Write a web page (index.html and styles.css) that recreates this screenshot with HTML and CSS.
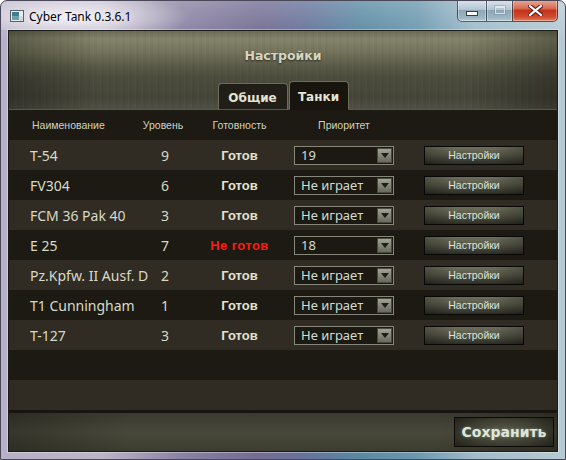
FILE: index.html
```html
<!DOCTYPE html>
<html lang="ru">
<head>
    <meta charset="UTF-8">
    <title>Cyber Tank 0.3.6.1</title>
    <link rel="stylesheet" href="styles.css">
</head>
<body>
    <div class="window">
        <div class="titlebar">
            <svg class="app-icon" width="14" height="12" viewBox="0 0 14 12">
                <rect x="0.5" y="0.5" width="13" height="11" fill="#e8eef0" stroke="#5a6068"/>
                <rect x="2" y="2" width="7" height="8" fill="#3d7f8c"/>
                <rect x="2" y="6" width="7" height="4" fill="#6aa0a8"/>
                <rect x="10" y="7" width="2" height="3" fill="#ffffff" stroke="#8a9098" stroke-width="0.5"/>
            </svg>
            <span class="title">Cyber Tank 0.3.6.1</span>
            <div class="caption-buttons">
                <div class="cap cap-min"><span class="glyph-min"></span></div>
                <div class="cap cap-max"><span class="glyph-max"></span></div>
                <div class="cap cap-close">
                    <svg width="15" height="11" viewBox="0 0 15 11">
                        <path d="M2 1 L13 10 M13 1 L2 10" stroke="#5a1a10" stroke-width="4.2" stroke-linecap="square"/>
                        <path d="M2 1 L13 10 M13 1 L2 10" stroke="#ffffff" stroke-width="2.2" stroke-linecap="square"/>
                    </svg>
                </div>
            </div>
        </div>

        <div class="client">
            <div class="header">
                <h1>Настройки</h1>
                <div class="tabs">
                    <div class="tab">Общие</div>
                    <div class="tab active">Танки</div>
                </div>
            </div>

            <div class="table">
                <div class="row head">
                    <div class="col-name">Наименование</div>
                    <div class="col-level">Уровень</div>
                    <div class="col-ready">Готовность</div>
                    <div class="col-prio">Приоритет</div>
                    <div></div>
                </div>

                <div class="row light">
                    <div class="col-name">T-54</div>
                    <div class="col-level">9</div>
                    <div class="col-ready ready">Готов</div>
                    <div class="col-prio"><div class="combo"><span class="combo-num">19</span><span class="combo-arrow"></span></div></div>
                    <div class="col-btn"><button class="btn-settings">Настройки</button></div>
                </div>
                <div class="row dark">
                    <div class="col-name">FV304</div>
                    <div class="col-level">6</div>
                    <div class="col-ready ready">Готов</div>
                    <div class="col-prio"><div class="combo"><span>Не играет</span><span class="combo-arrow"></span></div></div>
                    <div class="col-btn"><button class="btn-settings">Настройки</button></div>
                </div>
                <div class="row light">
                    <div class="col-name">FCM 36 Pak 40</div>
                    <div class="col-level">3</div>
                    <div class="col-ready ready">Готов</div>
                    <div class="col-prio"><div class="combo"><span>Не играет</span><span class="combo-arrow"></span></div></div>
                    <div class="col-btn"><button class="btn-settings">Настройки</button></div>
                </div>
                <div class="row dark">
                    <div class="col-name">E 25</div>
                    <div class="col-level">7</div>
                    <div class="col-ready not-ready">Не готов</div>
                    <div class="col-prio"><div class="combo"><span class="combo-num">18</span><span class="combo-arrow"></span></div></div>
                    <div class="col-btn"><button class="btn-settings">Настройки</button></div>
                </div>
                <div class="row light">
                    <div class="col-name">Pz.Kpfw. II Ausf. D</div>
                    <div class="col-level">2</div>
                    <div class="col-ready ready">Готов</div>
                    <div class="col-prio"><div class="combo"><span>Не играет</span><span class="combo-arrow"></span></div></div>
                    <div class="col-btn"><button class="btn-settings">Настройки</button></div>
                </div>
                <div class="row dark">
                    <div class="col-name">T1 Cunningham</div>
                    <div class="col-level">1</div>
                    <div class="col-ready ready">Готов</div>
                    <div class="col-prio"><div class="combo"><span>Не играет</span><span class="combo-arrow"></span></div></div>
                    <div class="col-btn"><button class="btn-settings">Настройки</button></div>
                </div>
                <div class="row light">
                    <div class="col-name">T-127</div>
                    <div class="col-level">3</div>
                    <div class="col-ready ready">Готов</div>
                    <div class="col-prio"><div class="combo"><span>Не играет</span><span class="combo-arrow"></span></div></div>
                    <div class="col-btn"><button class="btn-settings">Настройки</button></div>
                </div>
                <div class="row dark"></div>
                <div class="row light"></div>
            </div>

            <div class="footer">
                <button class="btn-save">Сохранить</button>
            </div>
        </div>
    </div>
</body>
</html>
```

FILE: styles.css
```css
* {
    box-sizing: border-box;
    margin: 0;
    padding: 0;
}

body {
    width: 566px;
    height: 460px;
    overflow: hidden;
    background: #ffffff;
}

.window {
    width: 566px;
    height: 460px;
    border: 1px solid #4a4858;
    border-radius: 7px 7px 0 0;
    background:
        linear-gradient(180deg, rgba(255, 255, 255, 0.22) 0%, rgba(255, 255, 255, 0) 40px),
        linear-gradient(90deg, #b8b0c6 0%, #bcb4c8 18%, #8a82a2 32%, #726c92 46%, #66729a 54%, #5a8aa2 64%, #6c98ae 74%, #a0bccb 84%, #b6cad4 100%);
    display: flex;
    flex-direction: column;
    overflow: hidden;
}

/* title bar */
.titlebar {
    height: 29px;
    display: flex;
    align-items: flex-start;
    padding-left: 9px;
    background: radial-gradient(ellipse 120px 24px at 70px 16px, rgba(255, 255, 255, 0.8), rgba(255, 255, 255, 0));
}

.app-icon {
    margin-top: 9px;
    flex-shrink: 0;
}

.title {
    margin-left: 5px;
    margin-top: 7px;
    font-family: 'Noto Sans', sans-serif;
    font-size: 12px;
    color: #000000;
    text-shadow: 0 0 6px rgba(255, 255, 255, 0.9);
}

.caption-buttons {
    margin-left: auto;
    margin-right: 7px;
    margin-top: -1px;
    display: flex;
    height: 22px;
}

.cap {
    height: 22px;
    display: flex;
    align-items: center;
    justify-content: center;
    border: 1px solid rgba(40, 52, 70, 0.75);
    border-top: none;
    box-shadow: inset 0 0 0 1px rgba(255, 255, 255, 0.35);
}

.cap-min,
.cap-max {
    background: linear-gradient(180deg, #d9e4ec 0%, #b4c6d2 45%, #8ea6b6 50%, #9db6c4 85%, #b8ccd8 100%);
}

.cap-min {
    width: 29px;
    border-radius: 0 0 0 5px;
    border-right: none;
}

.cap-max {
    width: 26px;
    border-right: none;
}

.cap-close {
    width: 46px;
    border-radius: 0 0 5px 0;
    background: linear-gradient(180deg, #eaa99a 0%, #d86a52 40%, #c5321c 50%, #cf4a30 80%, #e0805e 100%);
}

.glyph-min {
    width: 12px;
    height: 5px;
    margin-top: 6px;
    background: #ffffff;
    border: 1px solid #34404e;
}

.glyph-max {
    width: 10px;
    height: 8px;
    margin-top: -1px;
    border: 1px solid rgba(230, 238, 244, 0.8);
    border-top-width: 2px;
    box-shadow: 0 0 0 1px rgba(110, 130, 150, 0.35);
}

/* client area */
.client {
    flex: 1;
    margin: 0 7px 7px 7px;
    border: 1px solid #1c1c18;
    box-shadow: 0 0 0 1px rgba(255, 255, 255, 0.35);
    display: flex;
    flex-direction: column;
    background: #1c1a12;
}

.header {
    height: 79px;
    display: flex;
    flex-direction: column;
    align-items: center;
    border-bottom: 1px solid #58584a;
    background:
        linear-gradient(90deg, rgba(0, 0, 0, 0.3) 0%, rgba(0, 0, 0, 0) 16%, rgba(0, 0, 0, 0) 84%, rgba(0, 0, 0, 0.3) 100%),
        repeating-linear-gradient(90deg, rgba(255, 255, 255, 0.018) 0 1px, rgba(0, 0, 0, 0.025) 1px 4px, rgba(0, 0, 0, 0) 4px 7px),
        linear-gradient(180deg, #6c6c54 0%, #84846a 10%, #72725a 28%, #5a5a48 45%, #4c4c3e 60%, #454539 85%, #505044 100%);
}

h1 {
    margin-top: 17px;
    font-family: 'DejaVu Sans', sans-serif;
    font-size: 12.5px;
    font-weight: bold;
    color: #d6d6c0;
    text-shadow: 0 1px 2px rgba(0, 0, 0, 0.6);
}

.tabs {
    margin-top: auto;
    display: flex;
    align-items: flex-end;
    gap: 1px;
    margin-bottom: -1px;
}

.tab {
    font-family: 'DejaVu Sans', sans-serif;
    font-size: 12px;
    font-weight: bold;
    color: #e4e4d4;
    border: 1px solid #6c6c58;
    border-radius: 4px 4px 0 0;
    background: #201e16;
    height: 27px;
    width: 70px;
    display: flex;
    align-items: center;
    justify-content: center;
    padding-top: 3px;
    border-bottom: 1px solid #58584a;
}

.tab.active {
    height: 29px;
    width: 60px;
    background: #17150e;
    border-bottom-color: #17150e;
}

/* table */
.row {
    height: 30px;
    display: grid;
    grid-template-columns: 131px 50px 99px 110px 150px;
    align-items: center;
    font-family: 'Noto Sans', sans-serif;
    font-size: 14px;
    color: #d8dac8;
}

.row.light {
    background: #302c23;
}

.row.dark,
.row.head {
    background: #1c1a12;
}

.row.head {
    font-family: 'Liberation Sans', sans-serif;
    font-size: 10.5px;
    color: #d0d2c2;
}

.col-name {
    padding-left: 21px;
    white-space: nowrap;
}

.row.head .col-name {
    padding-left: 23px;
}

.col-level,
.col-ready,
.col-prio,
.col-btn {
    text-align: center;
    display: flex;
    justify-content: center;
}

.row.head .col-level {
    padding-right: 4px;
}

.ready,
.not-ready {
    font-family: 'Liberation Sans', sans-serif;
    font-size: 13px;
    font-weight: bold;
    color: #e2e2d2;
}

.not-ready {
    color: #ff1a10;
    letter-spacing: 0.4px;
}

.combo {
    width: 100px;
    height: 19px;
    border: 1px solid #86867a;
    background: #1b1911;
    display: flex;
    align-items: center;
    padding-left: 6px;
    padding-right: 1px;
    text-align: left;
    font-size: 13px;
    color: #d4dcd2;
    white-space: nowrap;
}

.combo-arrow {
    margin-left: auto;
    width: 15px;
    height: 15px;
    flex-shrink: 0;
    background: linear-gradient(180deg, #a4a496 0%, #858578 50%, #6a6a5e 100%);
    border: 1px solid #4a4a40;
    position: relative;
}

.combo-arrow::after {
    content: '';
    position: absolute;
    left: 3px;
    top: 4px;
    border-left: 4px solid transparent;
    border-right: 4px solid transparent;
    border-top: 5px solid #1e1e1a;
}

.btn-settings {
    width: 100px;
    height: 19px;
    border: 1px solid #070705;
    background:
        linear-gradient(90deg, rgba(0, 0, 0, 0.25), rgba(0, 0, 0, 0) 30%, rgba(0, 0, 0, 0) 70%, rgba(0, 0, 0, 0.25)),
        linear-gradient(180deg, #6e6e5c 0%, #5a5a4a 40%, #44443a 70%, #2c2c24 100%);
    font-family: 'Liberation Sans', sans-serif;
    font-size: 10.5px;
    color: #dde4dc;
}

/* footer */
.footer {
    flex: 1;
    border-top: 3px solid #16150f;
    display: flex;
    justify-content: flex-end;
    align-items: flex-start;
    padding: 4px 3px 0 0;
    background:
        linear-gradient(90deg, rgba(0, 0, 0, 0.25) 0%, rgba(0, 0, 0, 0) 22%, rgba(0, 0, 0, 0) 78%, rgba(0, 0, 0, 0.25) 100%),
        linear-gradient(180deg, #3a3a2f 0%, #48483b 50%, #3c3c30 100%);
}

.btn-save {
    width: 100px;
    height: 30px;
    border: 1px solid #0a0a07;
    background: radial-gradient(ellipse 60px 20px at 50% 50%, #5c5c4a 0%, #3e3e32 60%, #26261e 100%);
    font-family: 'DejaVu Sans', sans-serif;
    font-size: 14px;
    font-weight: bold;
    color: #dce6da;
    text-shadow: 0 0 3px rgba(190, 215, 195, 0.45);
}
```
